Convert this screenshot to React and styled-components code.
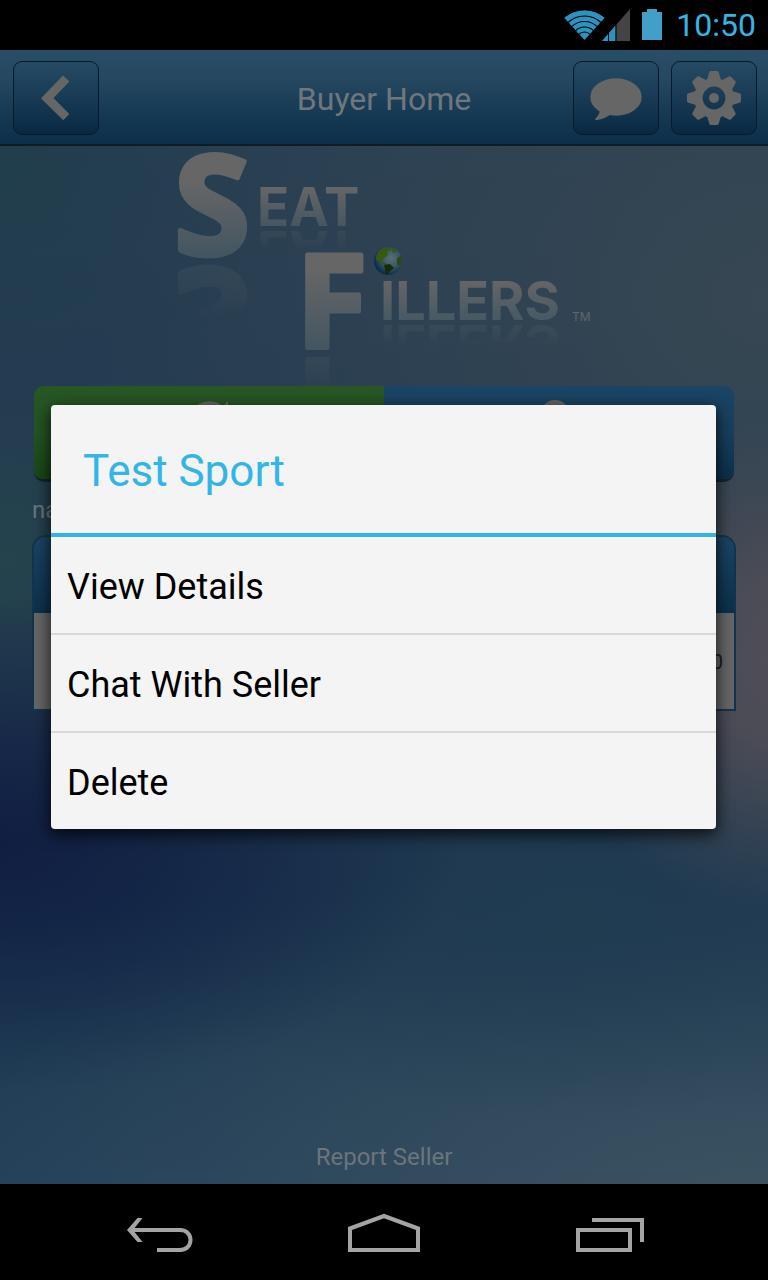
import React from "react";
import styled, { createGlobalStyle } from "styled-components";

const GlobalStyle = createGlobalStyle`
  *, *::before, *::after { box-sizing: border-box; }
  body { margin: 0; background: #000; font-family: Roboto, "Noto Sans", sans-serif; }
  button { font: inherit; color: inherit; border: 0; margin: 0; padding: 0; background: none; cursor: pointer; }
  svg { display: block; }
`;

const Device = styled.div`
  display: flex;
  flex-direction: column;
  min-height: 100vh;
  background: #000;
`;

const StatusBar = styled.div`
  display: flex;
  align-items: center;
  justify-content: flex-end;
  gap: 13px;
  height: 50px;
  padding-right: 12px;
`;

const Clock = styled.time`
  font-size: 32px;
  line-height: 50px;
  color: #33b5e5;
`;

const Screen = styled.div`
  position: relative;
  flex: 1;
  display: flex;
  flex-direction: column;
  background:
    radial-gradient(ellipse 34% 22% at 104% 54%, #514e56 0%, rgba(80, 78, 86, 0.85) 35%, rgba(80, 78, 86, 0) 100%),
    radial-gradient(ellipse 60% 22% at 0% 70%, #101e42 0%, rgba(16, 31, 66, 0.75) 30%, rgba(16, 30, 66, 0) 100%),
    radial-gradient(ellipse 36% 16% at 0% 45%, #24434c 0%, rgba(36, 67, 76, 0) 100%),
    radial-gradient(ellipse 60% 18% at 75% 76%, #203c51 0%, rgba(32, 60, 81, 0) 100%),
    radial-gradient(ellipse 110% 34% at 100% 103%, #3d5361 0%, rgba(61, 83, 97, 0) 100%),
    radial-gradient(ellipse 36% 22% at 0% 10%, #213e4c 0%, rgba(33, 62, 76, 0) 100%),
    radial-gradient(ellipse 90% 50% at 100% 22%, #374753 0%, rgba(55, 71, 83, 0) 100%),
    linear-gradient(#273f53 0%, #243b51 30%, #243a52 60%, #1b3450 75%, #203d55 88%, #23405a 100%);
`;

const Header = styled.header`
  display: grid;
  grid-template-columns: 1fr auto 1fr;
  align-items: center;
  height: 96px;
  padding: 2px 11px 0 13px;
  border-bottom: 2px solid #0f1c25;
  background: linear-gradient(#284e67 0%, #264860 30%, #173a55 65%, #0d2f49 100%);
`;

const HeaderTitle = styled.h1`
  margin: 0;
  padding: 2px 2px 0 0;
  font-size: 32px;
  line-height: 40px;
  font-weight: 400;
  color: #70777c;
`;

const HeaderGroup = styled.div`
  display: flex;
  gap: 12px;
  justify-content: ${(p) => p.$align};
`;

const HeaderButton = styled.button`
  display: flex;
  align-items: center;
  justify-content: center;
  width: 86px;
  height: 74px;
  border: 1px solid #061a2b;
  border-radius: 9px;
  background: linear-gradient(#274b65, #092943);
  color: #666;
`;

const Content = styled.main`
  flex: 1;
  display: flex;
  flex-direction: column;
  padding: 0 32px 11px;
`;

const Logo = styled.svg`
  align-self: center;
  flex: none;
  font-weight: 700;
`;

const LogoCapital = styled.text`
  font-family: "Open Sans", sans-serif;
  stroke-width: 5px;
  stroke-linejoin: round;
`;

const LogoWord = styled.text`
  font-family: Inter, sans-serif;
`;

const Actions = styled.div`
  display: flex;
  margin: 0 2px;
  border-radius: 10px;
  overflow: hidden;
  border-bottom: 3px solid #14252a;
`;

const ActionButton = styled.button`
  flex: 1;
  display: flex;
  justify-content: center;
  height: 93px;
  padding-top: 14px;
  background: ${(p) =>
    p.$tone === "green"
      ? "linear-gradient(#275724, #265323 50%, #174713)"
      : "linear-gradient(#1b4465, #193f5d 50%, #0c304d)"};
`;

const FieldLabel = styled.p`
  margin: 12px 0 9px;
  font-size: 24px;
  line-height: 32px;
  color: #6d767c;
`;

const Card = styled.section`
  border: 2px solid #12344e;
  border-radius: 14px 14px 0 0;
  overflow: hidden;
`;

const CardHead = styled.div`
  height: 76px;
  background: linear-gradient(#1b4564, #0c304c);
`;

const CardBody = styled.div`
  display: flex;
  align-items: center;
  justify-content: flex-end;
  height: 96px;
  padding: 2px 11px 0 0;
  background: #666;
  color: #1b1b1b;
  font-size: 20px;
`;

const ReportLink = styled.a`
  align-self: center;
  margin-top: auto;
  font-size: 24px;
  line-height: 32px;
  color: #6c757b;
  text-decoration: none;
`;

const Overlay = styled.div`
  position: absolute;
  inset: 0;
  display: flex;
  align-items: center;
  padding: 0 52px 0 51px;
`;

const Dialog = styled.div`
  flex: 1;
  border-radius: 4px;
  overflow: hidden;
  background: #f4f4f4;
  box-shadow: 0 5px 16px 1px rgba(0, 0, 0, 0.75);
`;

const DialogTitle = styled.h2`
  margin: 0;
  padding: 0 32px;
  font-size: 44px;
  line-height: 132px;
  height: 132px;
  font-weight: 400;
  color: #33b5e5;
  border-bottom: 4px solid #33b5e5;
`;

const Option = styled.button`
  display: block;
  width: 100%;
  height: 96px;
  padding: 4px 16px 0;
  font-size: 36px;
  line-height: 92px;
  text-align: left;
  color: #000;

  & + & {
    height: 98px;
    border-top: 2px solid #d8d8d8;
  }
`;

const NavBar = styled.nav`
  display: flex;
  height: 96px;
  padding: 0 6%;
`;

const NavButton = styled.button`
  flex: 1;
  display: flex;
  align-items: center;
  justify-content: center;
  color: #a4a4a4;
`;

function SystemIcons() {
  return (
    <svg width="100" height="34" viewBox="0 0 100 34" aria-hidden="true">
      <clipPath id="fan">
        <path d="M21.500 32L1 9.500Q21.500-5 42 9.500Z" />
      </clipPath>
      <g clipPath="url(#fan)">
        <circle cx="21.500" cy="32" r="30" fill="#2b93be" />
        <g fill="none" stroke="#000" strokeWidth="1.200">
          <circle cx="21.500" cy="32" r="24" />
          <circle cx="21.500" cy="32" r="18.500" />
          <circle cx="21.500" cy="32" r="13" />
          <circle cx="21.500" cy="32" r="8" />
        </g>
      </g>
      <path d="M39 33L67 1V33Z" fill="#444" />
      <path d="M39 33L52.500 17.500V33Z" fill="#2b93be" />
      <path d="M45.500 24V33M53 15V33" stroke="#000" />
      <path d="M79 4H84V1H94V4H99V32H79Z" fill="#429fc7" />
    </svg>
  );
}

function ChevronIcon() {
  return (
    <svg width="48" height="48" viewBox="0 0 48 48" fill="currentColor" aria-hidden="true">
      <path d="M31 1.500L37.300 7.500L21.500 24L37.300 40L31.300 46.200L9 24.300Z" />
    </svg>
  );
}

function ChatIcon() {
  return (
    <svg width="60" height="52" viewBox="0 0 60 52" fill="currentColor" aria-hidden="true">
      <ellipse cx="30" cy="25" rx="25.700" ry="18.700" />
      <path d="M14 37C14 41 12 44 9.500 46.500Q8 48.500 11 48Q19 47 25 42L17 33Z" />
    </svg>
  );
}

function GearIcon() {
  const teeth = [0, 45, 90, 135, 180, 225, 270, 315];
  return (
    <svg width="56" height="56" viewBox="-28 -28 56 56" fill="currentColor" aria-hidden="true">
      <circle r="15.700" fill="none" stroke="currentColor" strokeWidth="8.600" />
      {teeth.map((angle) => (
        <path key={angle} transform={`rotate(${angle})`} d="M-7-18L-4.800-25.500Q-4.500-27-3-27H3Q4.500-27 4.800-25.500L7-18Z" />
      ))}
      <circle r="5" />
    </svg>
  );
}

function Globe() {
  return (
    <g transform="translate(228 115)">
      <circle r="14" fill="url(#sea)" />
      <path d="M-12-4Q-10-12-3-13L4-13L2-10L-1-10L0-6L-4-3L-6 0L-3 2L0 4L-3 4L-8 1L-12-1Z" fill="#35590f" />
      <path d="M4-13L9-10L7-8L4-9Z" fill="#35590f" />
      <path d="M9-3L13-5Q15 1 12 5L9 3Z" fill="#2a4a10" />
      <path d="M-4 4L2 3L6 7L2 10L0 13.500L-3 12L-3 8Z" fill="#182b08" />
    </g>
  );
}

function SeatFillersLogo() {
  return (
    <Logo width="448" height="240" viewBox="0 0 448 240" role="img" aria-label="Seat Fillers">
      <defs>
        <linearGradient id="bigS" gradientUnits="userSpaceOnUse" x1="0" y1="10" x2="0" y2="112">
          <stop offset="0.250" stopColor="#666667" />
          <stop offset="1" stopColor="#425560" />
        </linearGradient>
        <linearGradient id="seat" gradientUnits="userSpaceOnUse" x1="0" y1="42" x2="0" y2="82">
          <stop offset="0" stopColor="#656566" />
          <stop offset="1" stopColor="#455560" />
        </linearGradient>
        <linearGradient id="bigF" gradientUnits="userSpaceOnUse" x1="0" y1="108" x2="0" y2="206">
          <stop offset="0.150" stopColor="#666667" />
          <stop offset="1" stopColor="#425560" />
        </linearGradient>
        <linearGradient id="fillers" gradientUnits="userSpaceOnUse" x1="0" y1="135" x2="0" y2="175">
          <stop offset="0" stopColor="#656566" />
          <stop offset="1" stopColor="#455964" />
        </linearGradient>
        <radialGradient id="sea" cx="0.600" cy="0.400" r="0.600">
          <stop offset="0" stopColor="#5d6c76" />
          <stop offset="0.500" stopColor="#3d5a69" />
          <stop offset="1" stopColor="#0c2c50" />
        </radialGradient>
        <linearGradient id="fade" x1="0" y1="0" x2="0" y2="1">
          <stop offset="0" stopColor="#fff" stopOpacity="0.400" />
          <stop offset="1" stopColor="#fff" stopOpacity="0" />
        </linearGradient>
        <mask id="fadeS" maskUnits="userSpaceOnUse" x="0" y="116" width="100" height="56">
          <rect y="116" width="100" height="56" fill="url(#fade)" />
        </mask>
        <mask id="fadeSeat" maskUnits="userSpaceOnUse" x="96" y="83" width="120" height="22">
          <rect x="96" y="83" width="120" height="22" fill="url(#fade)" />
        </mask>
        <mask id="fadeF" maskUnits="userSpaceOnUse" x="130" y="208" width="90" height="36">
          <rect x="130" y="208" width="90" height="36" fill="url(#fade)" />
        </mask>
        <mask id="fadeFillers" maskUnits="userSpaceOnUse" x="216" y="178" width="200" height="22">
          <rect x="216" y="178" width="200" height="22" fill="url(#fade)" />
        </mask>
      </defs>
      <LogoCapital id="letterS" x="14" y="109" fontSize="138" fill="url(#bigS)" stroke="url(#bigS)">S</LogoCapital>
      <LogoWord id="wordSeat" x="97" y="80" fontSize="53" fill="url(#seat)">EAT</LogoWord>
      <LogoCapital id="letterF" x="136" y="202" fontSize="130" fill="url(#bigF)" stroke="url(#bigF)">F</LogoCapital>
      <LogoWord id="wordFillers" x="220" y="174" fontSize="54" fill="url(#fillers)">ILLERS</LogoWord>
      <LogoWord x="412" y="175" fontSize="12" fontWeight="400" fill="#5f666c">TM</LogoWord>
      <g aria-hidden="true">
        <g mask="url(#fadeS)"><use href="#letterS" transform="matrix(1 0 0 -1 0 231)" /></g>
        <g mask="url(#fadeSeat)"><use href="#wordSeat" transform="matrix(1 0 0 -1 0 165)" /></g>
        <g mask="url(#fadeF)"><use href="#letterF" transform="matrix(1 0 0 -1 0 415)" /></g>
        <g mask="url(#fadeFillers)"><use href="#wordFillers" transform="matrix(1 0 0 -1 0 353)" /></g>
      </g>
      <Globe />
    </Logo>
  );
}

function RefreshIcon() {
  return (
    <svg width="48" height="48" viewBox="0 0 48 48" fill="none" stroke="#666" strokeWidth="7" aria-hidden="true">
      <path d="M40 33A18.500 18.500 0 1 1 37 10" />
      <path d="M43 1V17H28Z" fill="#666" stroke="none" />
    </svg>
  );
}

function PersonIcon() {
  return (
    <svg width="56" height="48" viewBox="0 0 56 48" fill="#666" aria-hidden="true">
      <circle cx="24" cy="14.500" r="14.500" />
      <path d="M4 48Q4 30 24 30T44 48Z" />
    </svg>
  );
}

function BackIcon() {
  return (
    <svg width="80" height="48" viewBox="0 0 80 48" fill="none" stroke="currentColor" strokeWidth="4" aria-hidden="true">
      <path d="M11 22H61C75 22 75 42 61 42H38" />
      <path d="M18.500 10H23.500L14 22L23.500 34H18.500L8 22Z" fill="currentColor" stroke="none" />
    </svg>
  );
}

function HomeIcon() {
  return (
    <svg width="80" height="48" viewBox="0 0 80 48" fill="none" stroke="currentColor" strokeWidth="4" aria-hidden="true">
      <path d="M6 42V20.500L40 8L74 20.500V42Z" />
    </svg>
  );
}

function RecentsIcon() {
  return (
    <svg width="80" height="48" viewBox="0 0 80 48" fill="none" stroke="currentColor" strokeWidth="4" aria-hidden="true">
      <path d="M9 22H61V42H9Z" />
      <path d="M23 12H73V34" />
    </svg>
  );
}

const options = ["View Details", "Chat With Seller", "Delete"];

export default function App() {
  return (
    <Device>
      <GlobalStyle />
      <StatusBar>
        <SystemIcons />
        <Clock>10:50</Clock>
      </StatusBar>
      <Screen>
        <Header>
          <HeaderGroup $align="flex-start">
            <HeaderButton aria-label="Back"><ChevronIcon /></HeaderButton>
          </HeaderGroup>
          <HeaderTitle>Buyer Home</HeaderTitle>
          <HeaderGroup $align="flex-end">
            <HeaderButton aria-label="Messages"><ChatIcon /></HeaderButton>
            <HeaderButton aria-label="Settings"><GearIcon /></HeaderButton>
          </HeaderGroup>
        </Header>
        <Content>
          <SeatFillersLogo />
          <Actions>
            <ActionButton $tone="green" aria-label="Refresh"><RefreshIcon /></ActionButton>
            <ActionButton $tone="blue" aria-label="Profile"><PersonIcon /></ActionButton>
          </Actions>
          <FieldLabel>na</FieldLabel>
          <Card>
            <CardHead />
            <CardBody>0</CardBody>
          </Card>
          <ReportLink href="#report">Report Seller</ReportLink>
        </Content>
        <Overlay>
          <Dialog role="dialog" aria-modal="true" aria-labelledby="dialog-title">
            <DialogTitle id="dialog-title">Test Sport</DialogTitle>
            {options.map((label) => (
              <Option key={label}>{label}</Option>
            ))}
          </Dialog>
        </Overlay>
      </Screen>
      <NavBar>
        <NavButton aria-label="Back"><BackIcon /></NavButton>
        <NavButton aria-label="Home"><HomeIcon /></NavButton>
        <NavButton aria-label="Recent apps"><RecentsIcon /></NavButton>
      </NavBar>
    </Device>
  );
}
